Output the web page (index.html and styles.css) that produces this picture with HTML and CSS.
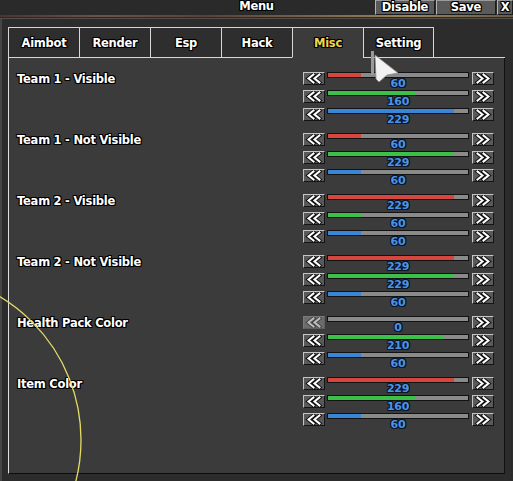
FILE: index.html
```html
<!DOCTYPE html>
<html>
<head>
<meta charset="utf-8">
<link rel="stylesheet" href="styles.css">
</head>
<body>
<svg class="defs" width="0" height="0" aria-hidden="true">
  <symbol id="chev-l" viewBox="0 0 20 11">
    <g fill="none" stroke-linejoin="miter" stroke-linecap="square">
      <path stroke-width="4" d="M9.5 1.5L4.5 5.5L9.5 9.5M15.5 1.5L10.5 5.5L15.5 9.5"/>
      <path stroke="currentColor" stroke-width="2" d="M9.5 1.5L4.5 5.5L9.5 9.5M15.5 1.5L10.5 5.5L15.5 9.5"/>
    </g>
  </symbol>
  <symbol id="chev-r" viewBox="0 0 20 11">
    <g fill="none" stroke-linejoin="miter" stroke-linecap="square">
      <path stroke-width="4" d="M4.5 1.5L9.5 5.5L4.5 9.5M10.5 1.5L15.5 5.5L10.5 9.5"/>
      <path stroke="currentColor" stroke-width="2" d="M4.5 1.5L9.5 5.5L4.5 9.5M10.5 1.5L15.5 5.5L10.5 9.5"/>
    </g>
  </symbol>
</svg>
<div class="app">
  <header class="titlebar">
    <div></div>
    <div class="title">Menu</div>
    <div class="tb-buttons">
      <div class="tbtn wide">Disable</div>
      <div class="tbtn wide">Save</div>
      <div class="tbtn close">X</div>
    </div>
  </header>
  <div class="strip"></div>
  <main class="window">
    <nav class="tabs">
      <div class="tab">Aimbot</div>
      <div class="tab">Render</div>
      <div class="tab">Esp</div>
      <div class="tab">Hack</div>
      <div class="tab active">Misc</div>
      <div class="tab last">Setting</div>
      <div class="tab-fill"></div>
    </nav>
    <section class="panel">

      <div class="group">
        <div class="label">Team 1 - Visible</div>
        <div class="sliders">
          <div class="row"><div class="arrow"><svg width="20" height="11"><use href="#chev-l"/></svg></div><div class="slider"><div class="track"><div class="fill red" style="width:23.53%"></div></div><div class="val">60</div></div><div class="arrow"><svg width="20" height="11"><use href="#chev-r"/></svg></div></div>
          <div class="row"><div class="arrow"><svg width="20" height="11"><use href="#chev-l"/></svg></div><div class="slider"><div class="track"><div class="fill green" style="width:62.75%"></div></div><div class="val">160</div></div><div class="arrow"><svg width="20" height="11"><use href="#chev-r"/></svg></div></div>
          <div class="row"><div class="arrow"><svg width="20" height="11"><use href="#chev-l"/></svg></div><div class="slider"><div class="track"><div class="fill blue" style="width:89.8%"></div></div><div class="val">229</div></div><div class="arrow"><svg width="20" height="11"><use href="#chev-r"/></svg></div></div>
        </div>
      </div>

      <div class="group">
        <div class="label">Team 1 - Not Visible</div>
        <div class="sliders">
          <div class="row"><div class="arrow"><svg width="20" height="11"><use href="#chev-l"/></svg></div><div class="slider"><div class="track"><div class="fill red" style="width:23.53%"></div></div><div class="val">60</div></div><div class="arrow"><svg width="20" height="11"><use href="#chev-r"/></svg></div></div>
          <div class="row"><div class="arrow"><svg width="20" height="11"><use href="#chev-l"/></svg></div><div class="slider"><div class="track"><div class="fill green" style="width:89.8%"></div></div><div class="val">229</div></div><div class="arrow"><svg width="20" height="11"><use href="#chev-r"/></svg></div></div>
          <div class="row"><div class="arrow"><svg width="20" height="11"><use href="#chev-l"/></svg></div><div class="slider"><div class="track"><div class="fill blue" style="width:23.53%"></div></div><div class="val">60</div></div><div class="arrow"><svg width="20" height="11"><use href="#chev-r"/></svg></div></div>
        </div>
      </div>

      <div class="group">
        <div class="label">Team 2 - Visible</div>
        <div class="sliders">
          <div class="row"><div class="arrow"><svg width="20" height="11"><use href="#chev-l"/></svg></div><div class="slider"><div class="track"><div class="fill red" style="width:89.8%"></div></div><div class="val">229</div></div><div class="arrow"><svg width="20" height="11"><use href="#chev-r"/></svg></div></div>
          <div class="row"><div class="arrow"><svg width="20" height="11"><use href="#chev-l"/></svg></div><div class="slider"><div class="track"><div class="fill green" style="width:23.53%"></div></div><div class="val">60</div></div><div class="arrow"><svg width="20" height="11"><use href="#chev-r"/></svg></div></div>
          <div class="row"><div class="arrow"><svg width="20" height="11"><use href="#chev-l"/></svg></div><div class="slider"><div class="track"><div class="fill blue" style="width:23.53%"></div></div><div class="val">60</div></div><div class="arrow"><svg width="20" height="11"><use href="#chev-r"/></svg></div></div>
        </div>
      </div>

      <div class="group">
        <div class="label">Team 2 - Not Visible</div>
        <div class="sliders">
          <div class="row"><div class="arrow"><svg width="20" height="11"><use href="#chev-l"/></svg></div><div class="slider"><div class="track"><div class="fill red" style="width:89.8%"></div></div><div class="val">229</div></div><div class="arrow"><svg width="20" height="11"><use href="#chev-r"/></svg></div></div>
          <div class="row"><div class="arrow"><svg width="20" height="11"><use href="#chev-l"/></svg></div><div class="slider"><div class="track"><div class="fill green" style="width:89.8%"></div></div><div class="val">229</div></div><div class="arrow"><svg width="20" height="11"><use href="#chev-r"/></svg></div></div>
          <div class="row"><div class="arrow"><svg width="20" height="11"><use href="#chev-l"/></svg></div><div class="slider"><div class="track"><div class="fill blue" style="width:23.53%"></div></div><div class="val">60</div></div><div class="arrow"><svg width="20" height="11"><use href="#chev-r"/></svg></div></div>
        </div>
      </div>

      <div class="group">
        <div class="label">Health Pack Color</div>
        <div class="sliders">
          <div class="row"><div class="arrow disabled"><svg width="20" height="11"><use href="#chev-l"/></svg></div><div class="slider"><div class="track"><div class="fill red" style="width:0%"></div></div><div class="val">0</div></div><div class="arrow"><svg width="20" height="11"><use href="#chev-r"/></svg></div></div>
          <div class="row"><div class="arrow"><svg width="20" height="11"><use href="#chev-l"/></svg></div><div class="slider"><div class="track"><div class="fill green" style="width:82.35%"></div></div><div class="val">210</div></div><div class="arrow"><svg width="20" height="11"><use href="#chev-r"/></svg></div></div>
          <div class="row"><div class="arrow"><svg width="20" height="11"><use href="#chev-l"/></svg></div><div class="slider"><div class="track"><div class="fill blue" style="width:23.53%"></div></div><div class="val">60</div></div><div class="arrow"><svg width="20" height="11"><use href="#chev-r"/></svg></div></div>
        </div>
      </div>

      <div class="group">
        <div class="label">Item Color</div>
        <div class="sliders">
          <div class="row"><div class="arrow"><svg width="20" height="11"><use href="#chev-l"/></svg></div><div class="slider"><div class="track"><div class="fill red" style="width:89.8%"></div></div><div class="val">229</div></div><div class="arrow"><svg width="20" height="11"><use href="#chev-r"/></svg></div></div>
          <div class="row"><div class="arrow"><svg width="20" height="11"><use href="#chev-l"/></svg></div><div class="slider"><div class="track"><div class="fill green" style="width:62.75%"></div></div><div class="val">160</div></div><div class="arrow"><svg width="20" height="11"><use href="#chev-r"/></svg></div></div>
          <div class="row"><div class="arrow"><svg width="20" height="11"><use href="#chev-l"/></svg></div><div class="slider"><div class="track"><div class="fill blue" style="width:23.53%"></div></div><div class="val">60</div></div><div class="arrow"><svg width="20" height="11"><use href="#chev-r"/></svg></div></div>
        </div>
      </div>

    </section>
  </main>
  <svg class="overlay" width="513" height="481" viewBox="0 0 513 481">
    <circle cx="-86" cy="440" r="167" fill="none" stroke="#e4dc66" stroke-width="1.3"/>
    <rect x="371" y="51" width="3" height="24" fill="#9a9a9a"/>
    <polygon points="375,55 398,73 387,75 379,82 376,79" fill="#f2f2f2" stroke="#8a8a8a" stroke-width="0.8"/>
  </svg>
</div>
</body>
</html>
```
FILE: styles.css
```css
html, body {
  margin: 0;
  padding: 0;
}
body {
  width: 513px;
  height: 481px;
  overflow: hidden;
  background: #2b2b2b;
  font-family: "DejaVu Sans", "Liberation Sans", sans-serif;
  font-weight: bold;
  font-size: 11.5px;
  letter-spacing: -0.25px;
  color: #fff;
}
.defs {
  position: absolute;
  width: 0;
  height: 0;
  overflow: hidden;
}
.app {
  position: relative;
  width: 513px;
  height: 481px;
  display: flex;
  flex-direction: column;
}
.titlebar {
  height: 15px;
  flex: none;
  background: #2a2a2a;
  display: grid;
  grid-template-columns: 1fr auto 1fr;
  align-items: center;
}
.title,
.tbtn,
.tab,
.label {
  text-shadow: 1px 0 #000, -1px 0 #000, 0 1px #000, 0 -1px #000,
    1px 1px #000, -1px -1px #000, 1px -1px #000, -1px 1px #000;
}
.title {
  line-height: 13px;
  padding-bottom: 2px;
}
.tb-buttons {
  display: flex;
  justify-content: flex-end;
  gap: 1px;
  height: 15px;
}
.tbtn {
  box-sizing: border-box;
  height: 15px;
  background: #5a5a5a;
  border-left: 1px solid #b4b4b4;
  border-top: 1px solid #9a9a9a;
  border-right: 1px solid #1c1c1c;
  border-bottom: 1px solid #1c1c1c;
  text-align: center;
  line-height: 12px;
}
.tbtn.wide { width: 60px; }
.tbtn.close { width: 16px; }
.strip {
  height: 2px;
  flex: none;
  background: linear-gradient(90deg, #4c3530 0%, #6e524a 20%, #5a4038 40%, #7a6248 60%, #9a8558 80%, #6a5a48 100%);
}
.window {
  flex: 1;
  display: flex;
  flex-direction: column;
  padding: 10px 8px 7px 8px;
  background: #2c2c2c;
  box-shadow: inset 0 1px 0 #2a2a2a, inset 0 2px 0 #4e4e4e, inset 2px 0 0 #454545;
}
.tabs {
  display: flex;
  height: 31px;
  flex: none;
}
.tab {
  box-sizing: border-box;
  width: 71px;
  height: 31px;
  background: #2e2e2e;
  border-left: 1px solid #d6d6d6;
  border-top: 1px solid #d6d6d6;
  border-bottom: 1px solid #d6d6d6;
  text-align: center;
  line-height: 30px;
}
.tab.last {
  border-right: 1px solid #d6d6d6;
}
.tab.active {
  background: #3b3b3b;
  border-bottom-color: #3b3b3b;
  color: #ecd84c;
}
.tab-fill {
  flex: 1;
  border-bottom: 1px solid #d6d6d6;
}
.panel {
  flex: 1;
  box-sizing: border-box;
  background: #3b3b3b;
  border-left: 1px solid #e0e0e0;
  border-right: 1px solid #111;
  border-bottom: 1px solid #0c0c0c;
  padding: 14px 10px 0 8px;
  display: flex;
  flex-direction: column;
  gap: 7px;
}
.group {
  display: grid;
  grid-template-columns: 1fr 191px;
}
.label {
  line-height: 13px;
  padding-top: 1px;
}
.sliders {
  display: flex;
  flex-direction: column;
}
.row {
  height: 18px;
  display: flex;
  align-items: flex-start;
}
.arrow {
  box-sizing: border-box;
  width: 22px;
  height: 13px;
  background: #5a5a5a;
  border-left: 1px solid #c4c4c4;
  border-top: 1px solid #c4c4c4;
  border-right: 1px solid #141414;
  border-bottom: 1px solid #141414;
}
.arrow svg {
  display: block;
  stroke: #111;
  color: #fff;
}
.arrow.disabled {
  background: #6c6c6c;
  border-color: #7a7a7a #5e5e5e #5e5e5e #7a7a7a;
}
.arrow.disabled svg {
  stroke: #444;
  color: #bcbcbc;
}
.slider {
  width: 142px;
  margin: 0 3px 0 2px;
}
.track {
  box-sizing: border-box;
  height: 6px;
  border: 1px solid #121212;
  background: #8a8a8a;
}
.fill {
  height: 100%;
}
.fill.red { background: #d4463e; }
.fill.green { background: #3cc04a; }
.fill.blue { background: #3a86d6; }
.val {
  line-height: 11px;
  font-size: 11px;
  text-align: center;
  color: #4a94e6;
  text-shadow: 1px 0 #0b1626, -1px 0 #0b1626, 0 1px #0b1626, 0 -1px #0b1626,
    1px 1px #0b1626, -1px -1px #0b1626, 1px -1px #0b1626, -1px 1px #0b1626;
}
.overlay {
  position: absolute;
  left: 0;
  top: 0;
  pointer-events: none;
}
```
